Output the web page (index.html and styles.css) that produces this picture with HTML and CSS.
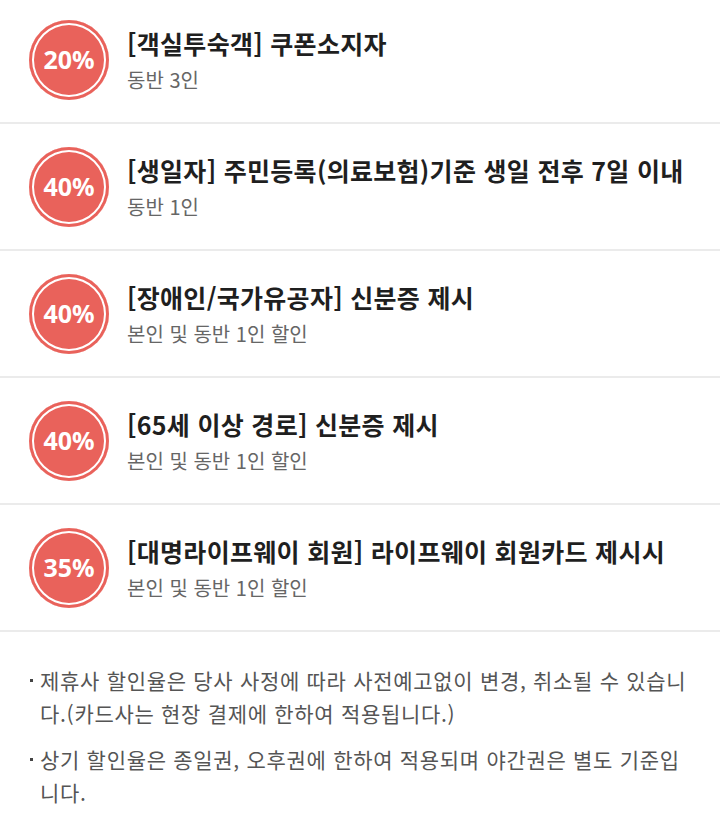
FILE: index.html
```html
<!DOCTYPE html>
<html lang="ko">
<head>
  <meta charset="UTF-8" />
  <meta name="viewport" content="width=device-width, initial-scale=1.0"/>
  <title>할인 안내</title>
  <link rel="stylesheet" href="styles.css">
</head>
<body>

  <ul class="discounts">
    <li class="item">
      <div class="badge">20%</div>
      <div class="info">
        <h3>[객실투숙객] 쿠폰소지자</h3>
        <p>동반 3인</p>
      </div>
    </li>
    <li class="item">
      <div class="badge">40%</div>
      <div class="info">
        <h3>[생일자] 주민등록(의료보험)기준 생일 전후 7일 이내</h3>
        <p>동반 1인</p>
      </div>
    </li>
    <li class="item">
      <div class="badge">40%</div>
      <div class="info">
        <h3>[장애인/국가유공자] 신분증 제시</h3>
        <p>본인 및 동반 1인 할인</p>
      </div>
    </li>
    <li class="item">
      <div class="badge">40%</div>
      <div class="info">
        <h3>[65세 이상 경로] 신분증 제시</h3>
        <p>본인 및 동반 1인 할인</p>
      </div>
    </li>
    <li class="item">
      <div class="badge">35%</div>
      <div class="info">
        <h3>[대명라이프웨이 회원] 라이프웨이 회원카드 제시시</h3>
        <p>본인 및 동반 1인 할인</p>
      </div>
    </li>
  </ul>

  <ul class="notes">
    <li>제휴사 할인율은 당사 사정에 따라 사전예고없이 변경, 취소될 수 있습니다.(카드사는 현장 결제에 한하여 적용됩니다.)</li>
    <li>상기 할인율은 종일권, 오후권에 한하여 적용되며 야간권은 별도 기준입니다.</li>
  </ul>

</body>
</html>
```

FILE: styles.css
```css
:root {
  --red: #e9625b;
  --line: #ebebeb;
  --title: #1f1f1f;
  --sub: #666666;
  --note: #555555;
}

* {
  box-sizing: border-box;
  margin: 0;
  padding: 0;
}

body {
  background: #ffffff;
  font-family: 'Noto Sans CJK KR', 'Noto Sans', sans-serif;
  overflow: hidden;
}

ul {
  list-style: none;
}

.discounts {
  margin-top: -3px;
}

.item {
  display: flex;
  align-items: center;
  gap: 18px;
  height: 127px;
  padding-left: 29px;
  border-bottom: 2px solid var(--line);
}

.badge {
  flex: none;
  width: 80px;
  height: 80px;
  border-radius: 50%;
  background: var(--red);
  box-shadow: inset 0 0 0 3px var(--red), inset 0 0 0 5px #ffffff;
  display: flex;
  align-items: center;
  justify-content: center;
  color: #ffffff;
  font-family: 'Noto Sans', sans-serif;
  font-weight: 700;
  font-size: 25px;
  padding-bottom: 2px;
}

.info h3 {
  font-size: 25px;
  font-weight: 700;
  letter-spacing: 0.3px;
  color: var(--title);
  line-height: 32px;
}

.info p {
  font-size: 20px;
  color: var(--sub);
  line-height: 26px;
  margin-top: 8px;
}

.notes {
  padding: 32px 30px 0 40px;
}

.notes li {
  position: relative;
  font-size: 21px;
  letter-spacing: 0.7px;
  line-height: 33px;
  color: var(--note);
  margin-bottom: 13px;
}

.notes li::before {
  content: '';
  position: absolute;
  left: -10px;
  top: 15px;
  width: 3px;
  height: 3px;
  background: #444444;
}
```
